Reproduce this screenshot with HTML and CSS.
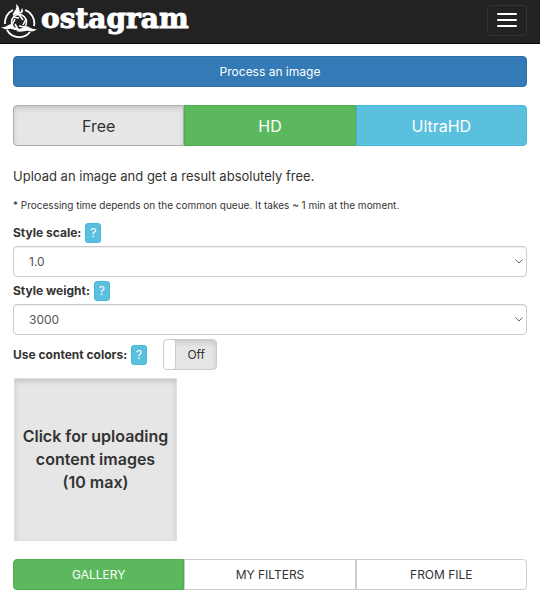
FILE: index.html
```
<!DOCTYPE html>
<html lang="en">
<head>
    <meta charset="UTF-8">
    <meta name="viewport" content="width=device-width, initial-scale=1.0">
    <title>Ostagram</title>
    <link rel="stylesheet" href="styles.css">
</head>
<body>

    <header class="navbar">
        <a class="brand" href="#">
            <svg class="brand-icon" viewBox="0 0 36 36" aria-hidden="true">
                <g fill="none" stroke="#fff">
                    <path d="M12 8A14 14 0 0 0 4 22M24 8A14 14 0 0 1 33 24M6 28A14 14 0 0 0 29 30" stroke-width="1.8"/>
                    <circle cx="18" cy="20" r="7.5" stroke-width="1.6"/>
                    <path d="M18 12.500L22 18M25 17L22 23M24 25L18 24M17 27.500L14 22M11 23L14 17M12 15L18 16" stroke-width="1.6"/>
                </g>
                <path fill="#fff" d="M12 14C11 10 17 8 15 2C19 5 18 8 19 10C21 9 20 7 21 6C23 9 22 12 17 12C14 12 13 13 12 14Z"/>
                <path fill="#fff" d="M0 25C5 26 7 22 11 22C11 25 14 27 18 28C13 29 11 26 8 27C5 28 3 27 0 25Z"/>
                <path fill="#fff" d="M36 27C31 28 29 25 25 24C23 27 20 27 15 29C20 31 25 28 28 29C31 30 34 29 36 27Z"/>
            </svg>
            <span class="brand-name">ostagram</span>
        </a>
        <button class="navbar-toggle" type="button" aria-label="Toggle navigation">
            <span class="icon-bar"></span>
            <span class="icon-bar"></span>
            <span class="icon-bar"></span>
        </button>
    </header>

    <main class="container">
        <button class="btn btn-primary" type="button">Process an image</button>

        <div class="btn-group quality">
            <button class="btn btn-default active" type="button">Free</button>
            <button class="btn btn-success" type="button">HD</button>
            <button class="btn btn-info" type="button">UltraHD</button>
        </div>

        <p class="lead">Upload an image and get a result absolutely free.</p>
        <p class="note">* Processing time depends on the common queue. It takes ~ 1 min at the moment.</p>

        <div class="form-label">
            <label for="style-scale">Style scale:</label>
            <button class="help" type="button">?</button>
        </div>
        <div class="select">
            <select class="form-control" id="style-scale">
                <option>1.0</option>
            </select>
            <svg class="caret" viewBox="0 0 8 5" aria-hidden="true"><path d="M0.500 0.500L4 4L7.500 0.500"/></svg>
        </div>

        <div class="form-label">
            <label for="style-weight">Style weight:</label>
            <button class="help" type="button">?</button>
        </div>
        <div class="select">
            <select class="form-control" id="style-weight">
                <option>3000</option>
            </select>
            <svg class="caret" viewBox="0 0 8 5" aria-hidden="true"><path d="M0.500 0.500L4 4L7.500 0.500"/></svg>
        </div>

        <div class="form-switch">
            <label for="content-colors">Use content colors:</label>
            <button class="help" type="button">?</button>
            <label class="toggle">
                <input type="checkbox" id="content-colors">
                <span class="toggle-handle"></span>
                <span class="toggle-text">Off</span>
            </label>
        </div>

        <button class="upload" type="button">Click for uploading content images<br>(10 max)</button>

        <div class="btn-group source">
            <button class="btn btn-success" type="button">GALLERY</button>
            <button class="btn btn-default" type="button">MY FILTERS</button>
            <button class="btn btn-default" type="button">FROM FILE</button>
        </div>
    </main>

</body>
</html>
```
FILE: styles.css
```
* {
    box-sizing: border-box;
}

body {
    margin: 0;
    background-color: #fff;
    color: #333;
    font-family: Inter, "Liberation Sans", sans-serif;
    font-size: 12px;
    line-height: 18px;
}

button,
select {
    font: inherit;
    color: inherit;
    cursor: pointer;
}

.navbar {
    display: flex;
    align-items: center;
    justify-content: space-between;
    height: 44px;
    padding: 0 13px 3px 1px;
    background-color: #222;
    border-bottom: 1px solid #080808;
}

.brand {
    display: flex;
    align-items: flex-start;
    gap: 4px;
    height: 36px;
    color: #fff;
    text-decoration: none;
}

.brand-icon {
    width: 36px;
    height: 36px;
}

.brand-name {
    font-family: "DejaVu Serif", serif;
    font-size: 28px;
    font-weight: bold;
    line-height: 34px;
    -webkit-text-stroke: 1px #fff;
}

.navbar-toggle {
    display: flex;
    flex-direction: column;
    align-items: center;
    justify-content: center;
    gap: 4px;
    width: 40px;
    height: 31px;
    padding: 0;
    background: none;
    border: 1px solid #333;
    border-radius: 4px;
}

.icon-bar {
    width: 20px;
    height: 2px;
    background-color: #fff;
    border-radius: 1px;
}

.container {
    display: flex;
    flex-direction: column;
    padding: 12px 13px 10px;
}

.btn {
    height: 31px;
    padding: 0 11px;
    border: 1px solid #ccc;
    border-radius: 4px;
}

.btn-primary {
    background-color: #337ab7;
    border-color: #2e6da4;
    color: #fff;
}

.btn-default {
    background-color: #fff;
}

.btn-success {
    background-color: #5cb85c;
    border-color: #4cae4c;
    color: #fff;
}

.btn-info {
    background-color: #5bc0de;
    border-color: #46b8da;
    color: #fff;
}

.btn.active {
    background-color: #e6e6e6;
    border-color: #adadad;
    box-shadow: inset 0 3px 5px rgba(0, 0, 0, 0.125);
}

.btn-group {
    display: grid;
    grid-template-columns: repeat(3, 1fr);
}

.btn-group .btn {
    border-radius: 0;
}

.btn-group .btn:first-child {
    border-radius: 4px 0 0 4px;
}

.btn-group .btn:last-child {
    border-radius: 0 4px 4px 0;
}

.quality {
    margin-top: 18px;
}

.quality .btn {
    height: 41px;
    font-size: 16px;
}

.lead {
    margin: 20px 0 10px;
    font-size: 13px;
    line-height: 20px;
}

.note {
    margin: 0 0 9px;
    font-size: 10px;
}

.form-label,
.form-switch {
    display: flex;
    align-items: center;
    gap: 4px;
    font-weight: bold;
}

.form-label {
    height: 20px;
    margin: 0 0 3px;
}

.help {
    width: 16px;
    height: 20px;
    padding: 0;
    background-color: #5bc0de;
    border: 1px solid #46b8da;
    border-radius: 3px;
    color: #fff;
    font-size: 12px;
    font-weight: normal;
    line-height: 18px;
}

.select {
    position: relative;
    margin-bottom: 4px;
}

.form-control {
    display: block;
    width: 100%;
    height: 31px;
    padding: 0 20px 0 15px;
    appearance: none;
    background-color: #fff;
    border: 1px solid #ccc;
    border-radius: 4px;
    box-shadow: inset 0 1px 1px rgba(0, 0, 0, 0.075);
    color: #555;
}

.caret {
    position: absolute;
    top: 13px;
    right: 4px;
    width: 8px;
    height: 5px;
    fill: none;
    stroke: #666;
    pointer-events: none;
}

.toggle {
    display: flex;
    width: 54px;
    height: 31px;
    margin-left: 12px;
    overflow: hidden;
    background-color: #e6e6e6;
    border: 1px solid #ccc;
    border-radius: 4px;
    box-shadow: inset 0 3px 5px rgba(0, 0, 0, 0.125);
    font-weight: normal;
    line-height: 29px;
    cursor: pointer;
}

.toggle input {
    position: absolute;
    opacity: 0;
}

.toggle-handle {
    width: 12px;
    background-color: #fff;
    border-right: 1px solid #ccc;
    border-radius: 3px;
}

.toggle-text {
    flex: 1;
    text-align: center;
}

.upload {
    width: 163px;
    height: 163px;
    margin: 8px 0 18px 1px;
    padding: 0 4px;
    background-color: #e6e6e6;
    border: 1px solid #ddd;
    box-shadow: inset 0 3px 5px rgba(0, 0, 0, 0.125);
    font-size: 16px;
    font-weight: 600;
    line-height: 23px;
}
```
